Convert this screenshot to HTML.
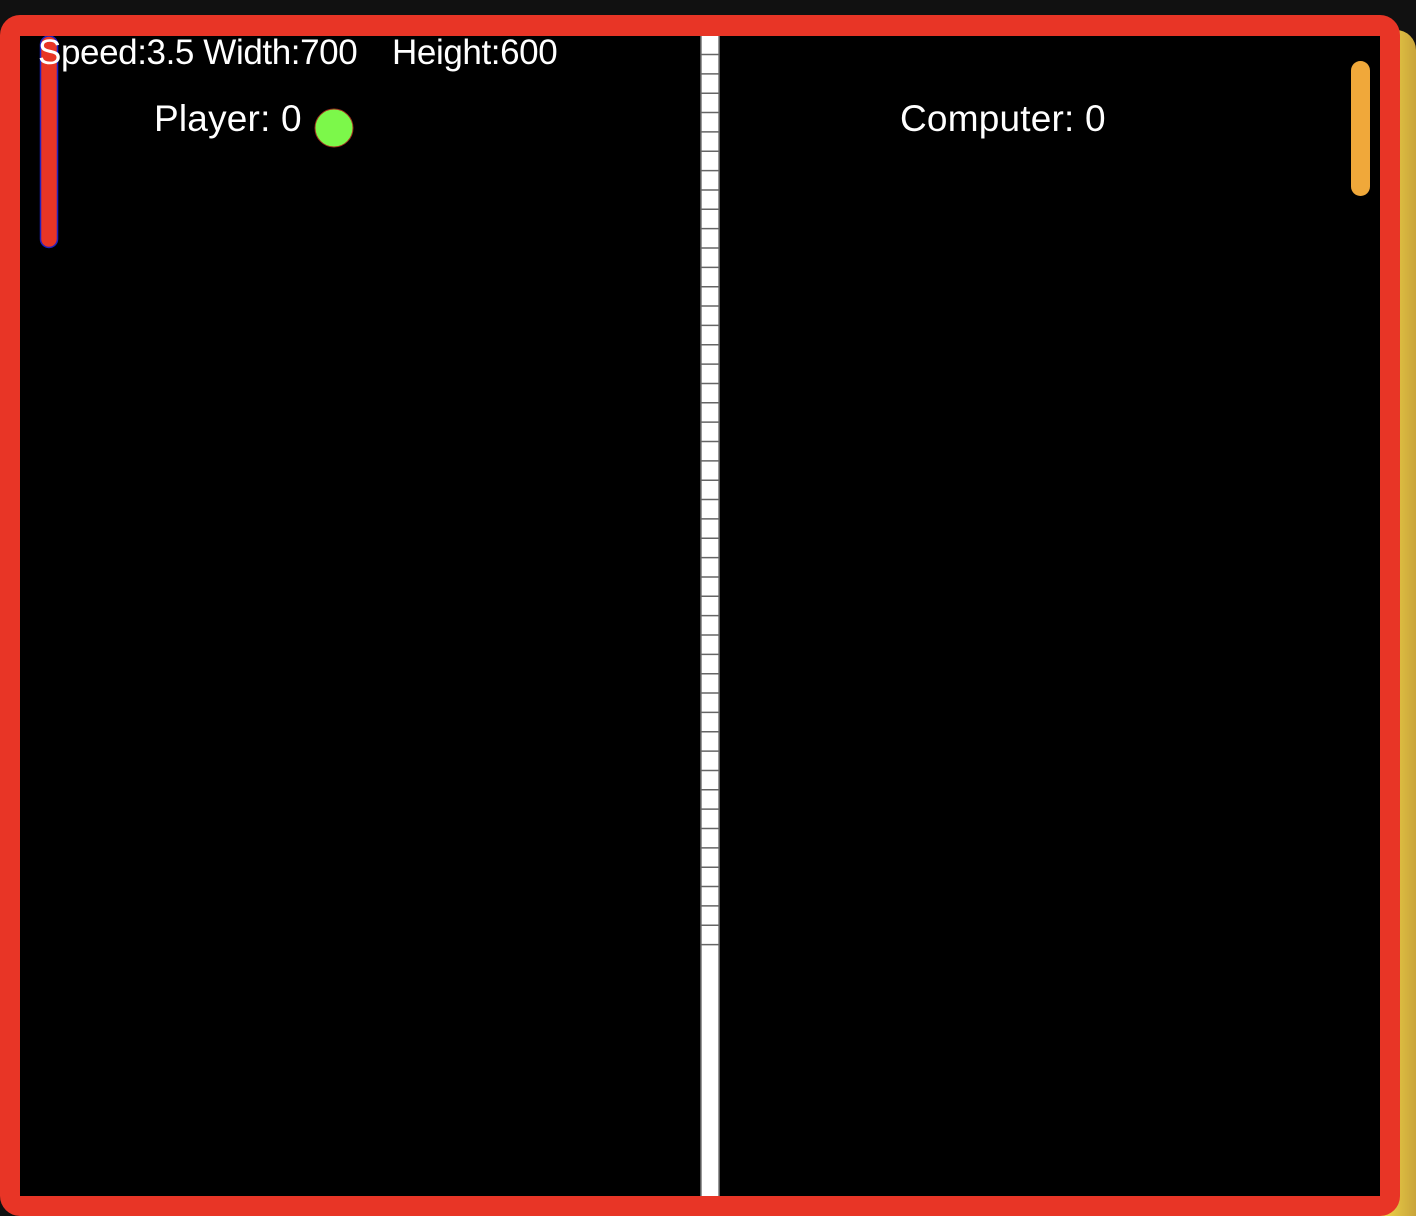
<!DOCTYPE html>
<html><head><style>
html,body{margin:0;padding:0;width:1416px;height:1216px;overflow:hidden;background:#111;font-family:"Liberation Sans",Arial,sans-serif;}
.yel{position:absolute;left:1380px;top:30px;width:36px;height:1186px;background:linear-gradient(90deg,#f2d84a,#c9a43a);border-radius:0 20px 0 0;}
.frame{position:absolute;left:0;top:15px;width:1400px;height:1201px;background:#e83526;border-radius:20px;}
.game{position:absolute;left:20px;top:36px;width:1360px;height:1160px;background:#000;overflow:hidden;}
.t{position:absolute;color:#fff;white-space:pre;}
</style></head><body>
<div class="yel"></div>
<div class="frame"></div>
<div class="game">
<svg width="1360" height="1160" style="position:absolute;left:0;top:0">
<rect x="681" y="0" width="18" height="1160" fill="#fff"/>
<g stroke="#777" stroke-width="1.5">
<line x1="681" y1="0" x2="681" y2="1160"/><line x1="699" y1="0" x2="699" y2="1160"/>
</g>
<g id="net" stroke="#666" stroke-width="1.5"></g>
<rect x="20.5" y="0" width="17" height="211.5" rx="8.5" fill="#e83526" stroke="#2020c0" stroke-width="1.5"/>
<rect x="1331" y="25" width="19" height="135" rx="9.5" fill="#f0a83a"/>
<circle cx="314" cy="92" r="19" fill="#7cf84a" stroke="#a03020" stroke-width="1"/>
</svg>
<div class="t" style="left:18px;top:-3px;font-size:35px;letter-spacing:-0.4px">Speed:3.5 Width:700</div>
<div class="t" style="left:372px;top:-3px;font-size:35px;letter-spacing:-0.4px">Height:600</div>
<div class="t" style="left:134px;top:62px;font-size:37px;letter-spacing:0.2px">Player: 0</div>
<div class="t" style="left:880px;top:62px;font-size:37px;letter-spacing:0.2px">Computer: 0</div>
</div>
<script>
var g=document.getElementById('net'),s='';
for(var i=0;i<47;i++){var y=18.5+i*19.35;s+='<line x1="681" y1="'+y+'" x2="699" y2="'+y+'"/>';}
g.innerHTML=s;
</script>
</body></html>
